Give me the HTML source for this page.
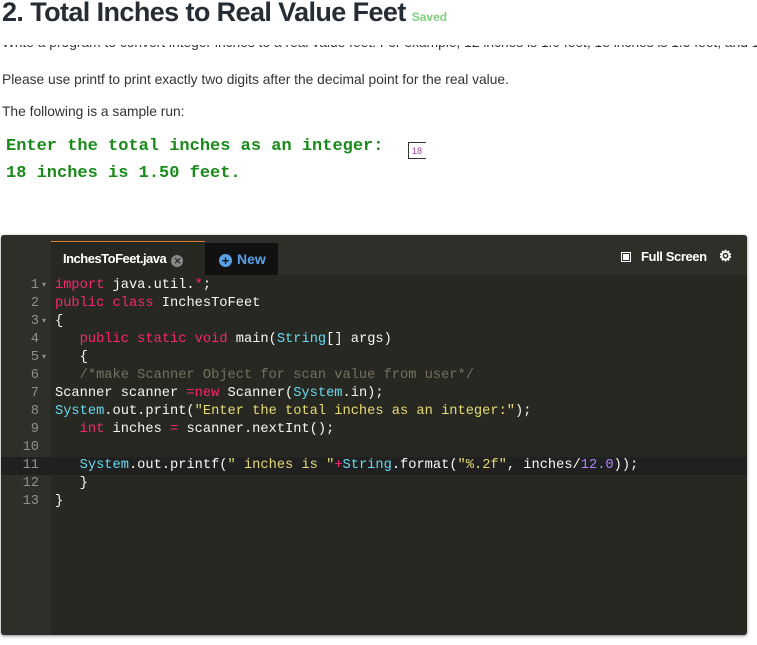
<!DOCTYPE html>
<html><head><meta charset="utf-8"><style>
body{margin:0;background:#fff;width:757px;height:645px;overflow:hidden;position:relative;font-family:"Liberation Sans",sans-serif;}
.title{position:absolute;left:2px;top:-3px;font-size:27px;font-weight:bold;color:#262c33;white-space:nowrap;letter-spacing:-0.6px}
.saved{font-size:12px;color:#7ed07e;font-weight:bold;margin-left:6px;letter-spacing:0}
.clip{position:absolute;left:2px;top:45px;height:6px;overflow:hidden;width:757px}
.clip div{margin-top:-10px;font-size:13.8px;color:#333;white-space:nowrap}
.p{position:absolute;left:2px;font-size:13.8px;color:#333;white-space:nowrap}
.g{position:absolute;left:6px;font-family:"Liberation Mono",monospace;font-weight:bold;font-size:17px;color:#1a8a1a;white-space:nowrap}
.box{position:absolute;left:408px;top:142px;width:18px;height:17px;border:1px solid #333;border-right:none;font-size:9px;color:#a040a0;line-height:17px;padding-left:3px;box-sizing:border-box}
.ed{position:absolute;left:1px;top:235px;width:746px;height:400px;background:#272822;border-radius:3px;overflow:hidden;box-shadow:0 1px 3px #888}
.hdr{position:absolute;left:0;top:0;width:746px;height:40px;background:#2f2f29}
.gut{position:absolute;left:0;top:40px;width:50px;height:360px;background:#2f2f29}
.tab1{position:absolute;left:50px;top:6px;width:154px;height:34px;background:#272822;border-top:1px solid #e07a2a;color:#fff;font-weight:bold;font-size:13px;line-height:33px;box-sizing:border-box;padding-left:12px;letter-spacing:-0.5px}
.x{display:inline-block;width:12px;height:12px;border-radius:50%;background:#888;color:#272822;font-size:9px;line-height:12px;text-align:center;margin-left:5px;vertical-align:-1px}
.tab2{position:absolute;left:204px;top:8px;width:73px;height:32px;background:#111;color:#5aa0e8;font-weight:bold;font-size:14px;line-height:32px;padding-left:14px;box-sizing:border-box}
.plus{display:inline-block;width:13px;height:13px;border-radius:50%;background:#5aa0e8;color:#111;font-size:13px;line-height:13px;text-align:center;margin-right:5px;vertical-align:-1px}
.fs{position:absolute;left:620px;top:12px;color:#fff;font-weight:bold;font-size:13px;letter-spacing:-0.4px}
.code{position:absolute;left:0;top:42px;width:746px;font-family:"Liberation Mono",monospace;font-size:13.7px;color:#f8f8f2}
.ln{height:18px;line-height:18px;position:relative;white-space:pre}
.ln .n{position:absolute;left:0;width:38px;text-align:right;color:#8f908a}
.ln .f{position:absolute;left:41px;color:#8f908a;font-size:8px}
.ln .c{position:absolute;left:54px}
.hl{background:#202020}
.k{color:#f92672}.t{color:#66d9ef}.s{color:#e6db74}.m{color:#75715e}.num{color:#ae81ff}
</style></head><body>
<div class="title">2. Total Inches to Real Value Feet<span class="saved">Saved</span></div>
<div class="clip"><div>Write a program to convert integer inches to a real value feet. For example, 12 inches is 1.0 feet, 18 inches is 1.5 feet, and 19 inches is 1.58 feet.</div></div>
<div class="p" style="top:72px">Please use printf to print exactly two digits after the decimal point for the real value.</div>
<div class="p" style="top:104px">The following is a sample run:</div>
<div class="g" style="top:137px">Enter the total inches as an integer:</div>
<div class="g" style="top:164px">18 inches is 1.50 feet.</div>
<div class="box">18</div>
<div class="ed">
<div class="hdr"></div><div class="gut"></div>
<div class="tab1">InchesToFeet.java<span class="x">✕</span></div>
<div class="tab2"><span class="plus">+</span>New</div>
<div class="fs"><span style="display:inline-block;width:8px;height:8px;border:1px solid #fff;margin-right:10px;vertical-align:-1px;background:#fff;box-shadow:inset 0 0 0 1px #2f2f29"></span>Full Screen<span style="margin-left:12px;font-size:15px">⚙</span></div>
<div class="code">
<div class="ln"><span class="n">1</span><span class="f">▾</span><span class="c"><span class="k">import</span> java.util.<span class="k">*</span>;</span></div>
<div class="ln"><span class="n">2</span><span class="c"><span class="k">public</span> <span class="k">class</span> InchesToFeet</span></div>
<div class="ln"><span class="n">3</span><span class="f">▾</span><span class="c">{</span></div>
<div class="ln"><span class="n">4</span><span class="c">   <span class="k">public</span> <span class="k">static</span> <span class="k">void</span> main(<span class="t">String</span>[] args)</span></div>
<div class="ln"><span class="n">5</span><span class="f">▾</span><span class="c">   {</span></div>
<div class="ln"><span class="n">6</span><span class="c">   <span class="m">/*make Scanner Object for scan value from user*/</span></span></div>
<div class="ln"><span class="n">7</span><span class="c">Scanner scanner <span class="k">=new</span> Scanner(<span class="t">System</span>.in);</span></div>
<div class="ln"><span class="n">8</span><span class="c"><span class="t">System</span>.out.print(<span class="s">"Enter the total inches as an integer:"</span>);</span></div>
<div class="ln"><span class="n">9</span><span class="c">   <span class="k">int</span> inches <span class="k">=</span> scanner.nextInt();</span></div>
<div class="ln"><span class="n">10</span><span class="c"></span></div>
<div class="ln hl"><span class="n">11</span><span class="c">   <span class="t">System</span>.out.printf(<span class="s">" inches is "</span><span class="k">+</span><span class="t">String</span>.format(<span class="s">"%.2f"</span>, inches/<span class="num">12.0</span>));</span></div>
<div class="ln"><span class="n">12</span><span class="c">   }</span></div>
<div class="ln"><span class="n">13</span><span class="c">}</span></div>
</div>
</div>
</body></html>
